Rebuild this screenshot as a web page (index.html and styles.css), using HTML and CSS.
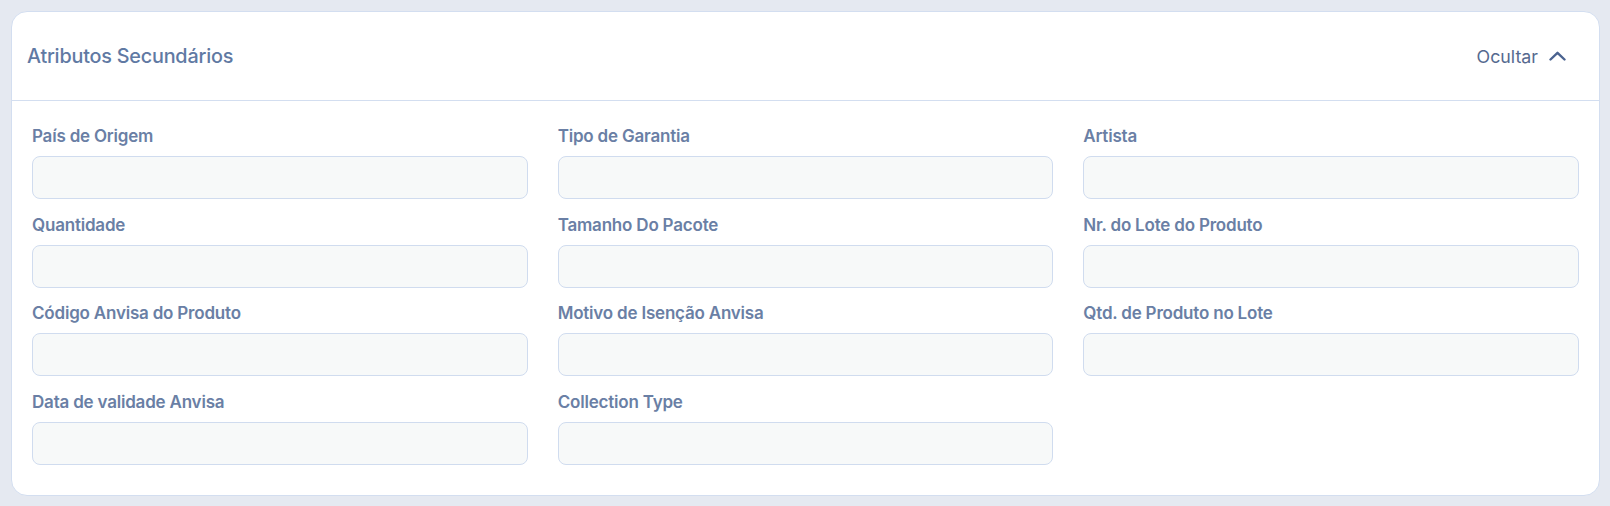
FILE: index.html
```html
<!DOCTYPE html>
<html lang="pt-BR">
  <head>
    <meta charset="UTF-8" />
    <meta name="viewport" content="width=device-width, initial-scale=1.0" />
    <title>Atributos Secundários</title>
    <link rel="stylesheet" href="styles.css">
  </head>
  <body>
    <section class="card">
      <header class="card_head">
        <h2>Atributos Secundários</h2>
        <button class="toggle">
          Ocultar
          <svg width="17" height="10" viewBox="0 0 17 10" fill="none">
            <path d="M1.5 8.5 L8.5 1.8 L15.5 8.5" stroke="#4b6390" stroke-width="2.4" stroke-linecap="round" stroke-linejoin="round" />
          </svg>
        </button>
      </header>
      <div class="fields">
        <label class="field"><span>País de Origem</span><input type="text" /></label>
        <label class="field"><span>Tipo de Garantia</span><input type="text" /></label>
        <label class="field"><span>Artista</span><input type="text" /></label>
        <label class="field"><span>Quantidade</span><input type="text" /></label>
        <label class="field"><span>Tamanho Do Pacote</span><input type="text" /></label>
        <label class="field"><span>Nr. do Lote do Produto</span><input type="text" /></label>
        <label class="field"><span>Código Anvisa do Produto</span><input type="text" /></label>
        <label class="field"><span>Motivo de Isenção Anvisa</span><input type="text" /></label>
        <label class="field"><span>Qtd. de Produto no Lote</span><input type="text" /></label>
        <label class="field"><span>Data de validade Anvisa</span><input type="text" /></label>
        <label class="field"><span>Collection Type</span><input type="text" /></label>
      </div>
    </section>
  </body>
</html>
```

FILE: styles.css
```css
* {
  box-sizing: border-box;
  margin: 0;
  padding: 0;
}

body {
  background-color: #e5e9f1;
  font-family: Inter, "Open Sans", sans-serif;
  padding: 11px 10px 11px 11px;
}

.card {
  background-color: #fff;
  border: 1px solid #d3def0;
  border-radius: 16px;
}

.card_head {
  display: flex;
  justify-content: space-between;
  align-items: center;
  height: 89px;
  padding: 0 33px 0 15px;
  border-bottom: 1px solid #d3def0;
}

.card_head h2 {
  font-size: 19.8px;
  font-weight: 500;
  color: #6079a3;
  letter-spacing: -0.2px;
}

.toggle {
  display: flex;
  align-items: center;
  gap: 11px;
  background: none;
  border: none;
  font-family: inherit;
  font-size: 17.8px;
  color: #55698f;
  cursor: pointer;
}

.fields {
  display: grid;
  grid-template-columns: repeat(3, 1fr);
  column-gap: 30px;
  row-gap: 15.5px;
  padding: 25px 20px 30px 20px;
}

.field {
  display: flex;
  flex-direction: column;
  gap: 10px;
}

.field span {
  font-size: 17px;
  font-weight: 600;
  color: #6a7fa5;
  line-height: 20px;
  letter-spacing: -0.2px;
}

.field input {
  height: 43px;
  background-color: #f7f9f9;
  border: 1px solid #d0dcef;
  border-radius: 8px;
  outline: none;
}
```
